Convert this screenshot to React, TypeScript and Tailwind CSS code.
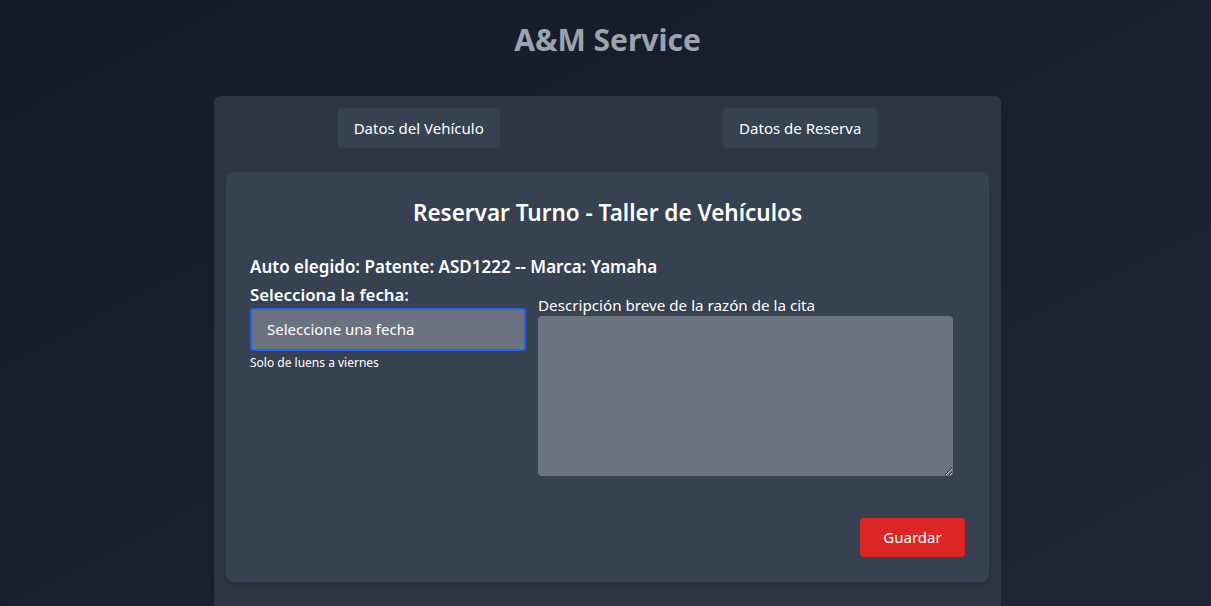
import React from "react";

export default function App() {
  return (
    <div
      className="min-h-screen w-full bg-gradient-to-br from-[#141a29] to-[#1e2533] overflow-hidden"
      style={{ fontFamily: '"Noto Sans", "Open Sans", sans-serif' }}
    >
      <h1 className="pt-[20px] pl-[4px] text-center text-[30px] font-bold leading-[40px] text-[#9ca3af]">
        A&amp;M Service
      </h1>
      <div className="flex justify-center pl-[4px]">
        <div className="mt-[36px] w-[787px] rounded-t-md bg-[#2f3542] p-3 pb-10">
          <div className="flex justify-around">
            <button className="h-10 rounded bg-[#374151] px-4 text-[15px] text-white">
              Datos del Vehículo
            </button>
            <button className="h-10 rounded bg-[#374151] px-4 text-[15px] text-white">
              Datos de Reserva
            </button>
          </div>
          <div className="mt-6 rounded-lg bg-[#374151] px-6 pt-[27px] pb-[25px] shadow-lg">
            <h2 className="text-center text-[22.5px] font-semibold leading-[28px] text-white">
              Reservar Turno - Taller de Vehículos
            </h2>
            <p className="mt-[28px] text-[17px] font-semibold leading-[24px] text-white">
              Auto elegido: Patente: ASD1222 -- Marca: Yamaha
            </p>
            <div className="mt-[4px] flex gap-3">
              <div className="w-[276px]">
                <label className="block text-[16.8px] font-semibold leading-[24px] text-white">
                  Selecciona la fecha:
                </label>
                <div className="mt-[1px] flex h-[43px] items-center rounded border-2 border-[#2563eb] bg-[#6b7280] px-[15px] text-[15px] text-white">
                  Seleccione una fecha
                </div>
                <p className="mt-[4px] text-[12px] leading-[16px] text-white">Solo de luens a viernes</p>
              </div>
              <div className="pt-[11px]">
                <label className="block text-[15.2px] leading-[22px] text-white">
                  Descripción breve de la razón de la cita
                </label>
                <textarea className="block h-[160px] w-[415px] rounded bg-[#6b7280] text-white outline-none" />
              </div>
            </div>
            <div className="mt-[42px] flex justify-end">
              <button className="h-[39px] w-[105px] rounded bg-[#dc2626] text-[15px] text-white">
                Guardar
              </button>
            </div>
          </div>
        </div>
      </div>
    </div>
  );
}
